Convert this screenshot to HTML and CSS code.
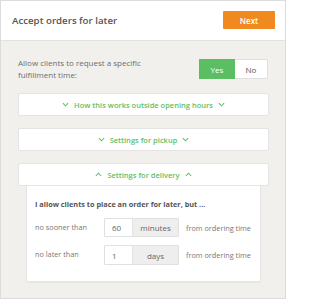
FILE: index.html
```html
<!DOCTYPE html>
<html>
<head>
<meta charset="utf-8">
<link rel="stylesheet" href="styles.css">
</head>
<body>
<div class="panel">
  <div class="header">
    <div class="title">Accept orders for later</div>
    <button class="next">Next</button>
  </div>
  <div class="content">
    <div class="question">
      <div class="qlabel">Allow clients to request a specific<br>fulfillment time:</div>
      <div class="toggle">
        <span class="opt on">Yes</span>
        <span class="opt">No</span>
      </div>
    </div>
    <div class="card">
      <div class="card-head">
        <svg class="chev" viewBox="0 0 8 5"><polyline points="1,1 4,4 7,1"/></svg>
        <span>How this works outside opening hours</span>
        <svg class="chev" viewBox="0 0 8 5"><polyline points="1,1 4,4 7,1"/></svg>
      </div>
    </div>
    <div class="card">
      <div class="card-head">
        <svg class="chev" viewBox="0 0 8 5"><polyline points="1,1 4,4 7,1"/></svg>
        <span>Settings for pickup</span>
        <svg class="chev" viewBox="0 0 8 5"><polyline points="1,1 4,4 7,1"/></svg>
      </div>
    </div>
    <div class="card open">
      <div class="card-head">
        <svg class="chev" viewBox="0 0 8 5"><polyline points="1,4 4,1 7,4"/></svg>
        <span>Settings for delivery</span>
        <svg class="chev" viewBox="0 0 8 5"><polyline points="1,4 4,1 7,4"/></svg>
      </div>
    </div>
    <div class="card-body">
      <div class="lead">I allow clients to place an order for later, but ...</div>
      <div class="row">
        <span class="rlabel">no sooner than</span>
        <span class="group"><span class="val">60</span><span class="unit">minutes</span></span>
        <span class="after">from ordering time</span>
      </div>
      <div class="row">
        <span class="rlabel">no later than</span>
        <span class="group"><span class="val">1</span><span class="unit">days</span></span>
        <span class="after">from ordering time</span>
      </div>
    </div>
  </div>
</div>
</body>
</html>
```
FILE: styles.css
```css
html, body {
  margin: 0;
  padding: 0;
  background: #ffffff;
}
body {
  font-family: "Open Sans", "DejaVu Sans", sans-serif;
  color: #6b6b6b;
}
.panel {
  width: 284px;
  height: 297px;
  border: 1px solid #dcdcdc;
  display: flex;
  flex-direction: column;
  background: #f1f0ed;
}
.header {
  height: 39px;
  flex: 0 0 39px;
  background: #ffffff;
  border-bottom: 1px solid #e2e2e2;
  display: flex;
  align-items: center;
  justify-content: space-between;
  padding: 0 10px 0 11px;
}
.title {
  font-size: 9.7px;
  font-weight: 600;
  color: #555555;
}
.next {
  width: 52px;
  height: 18px;
  margin-top: -1px;
  border: none;
  border-radius: 1px;
  background: #f0891e;
  color: #ffffff;
  font-family: "Open Sans", sans-serif;
  font-size: 8px;
  font-weight: 600;
  padding: 0;
}
.content {
  flex: 1;
  padding: 16px 16px 0 17px;
  display: flex;
  flex-direction: column;
}
.question {
  display: flex;
  align-items: center;
  justify-content: space-between;
  margin-bottom: 12px;
}
.qlabel {
  font-size: 8px;
  line-height: 12px;
  color: #6e6e6e;
}
.toggle {
  display: flex;
  height: 20px;
  margin-right: 1px;
  border: 1px solid #e0e0e0;
  box-sizing: border-box;
  border-radius: 1px;
  background: #fff;
}
.opt {
  display: flex;
  align-items: center;
  justify-content: center;
  font-size: 8px;
  color: #555;
  width: 32px;
}
.opt.on {
  width: 36px;
  background: #5cbe62;
  color: #ffffff;
  margin: -1px 0 -1px -1px;
}
.card {
  background: #ffffff;
  border: 1px solid #e4e4e4;
  border-radius: 2px;
  margin-bottom: 12px;
}
.card.open {
  margin-bottom: 0;
}
.card-head {
  height: 21px;
  display: flex;
  align-items: center;
  justify-content: center;
  gap: 5px;
  color: #62c065;
  font-size: 7.5px;
  font-weight: 600;
}
.chev {
  width: 7px;
  height: 5px;
  fill: none;
  stroke: #62c065;
  stroke-width: 1.2;
}
.card-body {
  margin: 0 8px;
  background: #ffffff;
  border: 1px solid #e6e6e6;
  border-top: none;
  border-radius: 0 0 2px 2px;
  box-shadow: 0 1px 1px rgba(0,0,0,0.04);
  padding: 12px 8px 16px 8px;
}
.lead {
  font-size: 7.3px;
  font-weight: 700;
  color: #555;
  line-height: 12px;
  margin-bottom: 8px;
}
.row {
  display: flex;
  align-items: center;
  height: 19px;
  margin-bottom: 8px;
  white-space: nowrap;
}
.row:last-child {
  margin-bottom: 0;
  height: 20px;
}
.rlabel {
  width: 69px;
  font-size: 7.3px;
  color: #777;
  margin-top: -2px;
}
.group {
  display: flex;
  height: 100%;
  width: 75px;
  border: 1px solid #e0e0e0;
  box-sizing: border-box;
  border-radius: 1px;
}
.val {
  width: 28px;
  padding-left: 7px;
  box-sizing: border-box;
  display: flex;
  align-items: center;
  font-size: 8px;
  color: #666;
  border-right: 1px solid #e3e3e3;
}
.unit {
  flex: 1;
  background: #eeeeee;
  display: flex;
  align-items: center;
  justify-content: center;
  font-size: 8px;
  color: #666;
}
.after {
  margin-left: 7px;
  font-size: 7.3px;
  color: #777;
}
```
